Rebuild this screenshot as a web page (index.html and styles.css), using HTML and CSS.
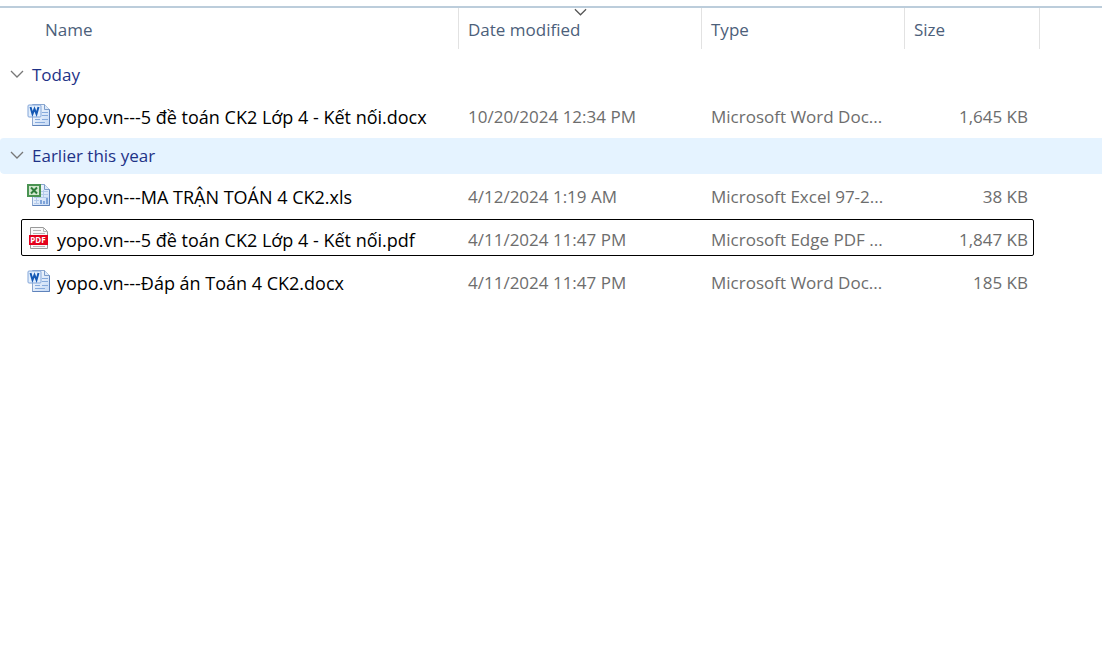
FILE: index.html
```html
<!DOCTYPE html>
<html lang="vi">
<head>
<meta charset="utf-8">
<meta name="viewport" content="width=device-width, initial-scale=1">
<title>Files</title>
<link rel="stylesheet" href="styles.css">
</head>
<body>
<svg class="symbols" aria-hidden="true">
  <defs>
    <linearGradient id="paper" x1="0" y1="0" x2="1" y2="1">
      <stop offset="0" stop-color="#ffffff"/>
      <stop offset="1" stop-color="#c3d8f5"/>
    </linearGradient>
    <symbol id="icon-word" viewBox="0 0 24 24">
      <path d="M5.500 1.500H17.500L22.500 6.500V22.500H5.500Z" fill="url(#paper)" stroke="#8aa6cf"/>
      <path d="M22.500 6.500V22.500H5.500" fill="none" stroke="#5f83bb"/>
      <path d="M17.500 1.500V6.500H22.500" fill="#dce9fa" stroke="#7d9dca"/>
      <path d="M15 9.500H21M15 12.500H21M8 16.500H13M15 16.500H21M8 19.500H18" stroke="#86aadc"/>
      <rect x="1" y="2" width="13" height="12" rx="1" fill="#e3effd" stroke="#82a5d8"/>
      <path d="M3.500 4L5.500 11L7.500 6L9.500 11L11.500 4" fill="none" stroke="#1559b5" stroke-width="2"/>
    </symbol>
    <symbol id="icon-excel" viewBox="0 0 24 24">
      <path d="M5.500 1.500H17.500L22.500 6.500V22.500H5.500Z" fill="url(#paper)" stroke="#8aa6cf"/>
      <path d="M22.500 6.500V22.500H5.500" fill="none" stroke="#5f83bb"/>
      <path d="M17.500 1.500V6.500H22.500" fill="#dce9fa" stroke="#7d9dca"/>
      <path d="M14 8.500H21M14 11.500H21M7 14.500H21M7 17.500H12M7 20.500H12M16.500 7V14M9.500 14V21" stroke="#b4caea"/>
      <path d="M13 21V17H15V21M16 21V18H18V21M19 21V15H21V21" fill="#7fa4d9"/>
      <rect x="1" y="2" width="12" height="11" fill="#d3e8cf" stroke="#4a9352" stroke-width="2"/>
      <path d="M4 4.500L10 10.500M10 4.500L4 10.500" stroke="#2f7d3c" stroke-width="2"/>
    </symbol>
    <symbol id="icon-pdf" viewBox="0 0 24 24">
      <path d="M3.500 1.500H16.500L20.500 5.500V22.500H3.500Z" fill="#f8f8f8" stroke="#999"/>
      <path d="M16.500 1.500V5.500H20.500M6 4.500H14M6 7.500H18M6 20.500H18" fill="none" stroke="#b5b5b5"/>
      <rect x="2" y="9" width="19" height="10" fill="#e3001b"/>
      <text x="11" y="17" text-anchor="middle" class="pdf-label">PDF</text>
    </symbol>
    <symbol id="icon-chevron" viewBox="0 0 14 8">
      <path d="M1 1L7 7L13 1" fill="none" stroke="currentColor" stroke-width="1.300"/>
    </symbol>
  </defs>
</svg>

<main class="explorer">
  <table class="files">
    <colgroup>
      <col class="col-name"><col class="col-date"><col class="col-type"><col class="col-size"><col class="col-rest">
    </colgroup>
    <thead>
      <tr>
        <th scope="col" class="head head-name"><button type="button" class="head-button">Name</button></th>
        <th scope="col" class="head" aria-sort="descending"><button type="button" class="head-button">Date modified<svg class="sort-mark" aria-hidden="true"><use href="#icon-chevron"/></svg></button></th>
        <th scope="col" class="head"><button type="button" class="head-button">Type</button></th>
        <th scope="col" class="head"><button type="button" class="head-button">Size</button></th>
        <td></td>
      </tr>
    </thead>
    <tbody>
      <tr>
        <th colspan="5" scope="rowgroup" class="group group-first"><button type="button" class="group-button" aria-expanded="true"><svg class="chevron" aria-hidden="true"><use href="#icon-chevron"/></svg>Today</button></th>
      </tr>
      <tr class="file">
        <td class="name"><div class="name-box"><svg class="icon" aria-hidden="true"><use href="#icon-word"/></svg>yopo.vn---5 đề toán CK2 Lớp 4 - Kết nối.docx</div></td>
        <td>10/20/2024 12:34 PM</td>
        <td>Microsoft Word Doc...</td>
        <td class="size">1,645 KB</td>
        <td></td>
      </tr>
    </tbody>
    <tbody>
      <tr>
        <th colspan="5" scope="rowgroup" class="group group-hover"><button type="button" class="group-button" aria-expanded="true"><svg class="chevron" aria-hidden="true"><use href="#icon-chevron"/></svg>Earlier this year</button></th>
      </tr>
      <tr class="file">
        <td class="name"><div class="name-box"><svg class="icon" aria-hidden="true"><use href="#icon-excel"/></svg>yopo.vn---MA TRẬN TOÁN 4 CK2.xls</div></td>
        <td>4/12/2024 1:19 AM</td>
        <td>Microsoft Excel 97-2...</td>
        <td class="size">38 KB</td>
        <td></td>
      </tr>
      <tr class="file focused">
        <td class="name"><div class="name-box"><svg class="icon" aria-hidden="true"><use href="#icon-pdf"/></svg>yopo.vn---5 đề toán CK2 Lớp 4 - Kết nối.pdf</div></td>
        <td>4/11/2024 11:47 PM</td>
        <td>Microsoft Edge PDF ...</td>
        <td class="size">1,847 KB</td>
        <td></td>
      </tr>
      <tr class="file">
        <td class="name"><div class="name-box"><svg class="icon" aria-hidden="true"><use href="#icon-word"/></svg>yopo.vn---Đáp án Toán 4 CK2.docx</div></td>
        <td>4/11/2024 11:47 PM</td>
        <td>Microsoft Word Doc...</td>
        <td class="size">185 KB</td>
        <td></td>
      </tr>
    </tbody>
  </table>
</main>
</body>
</html>
```

FILE: styles.css
```css
* {
  box-sizing: border-box;
}

body {
  margin: 0;
  padding-top: 6px;
  background: #fff;
  color: #6d6d6d;
  font: 17px/24px "Open Sans", "Noto Sans", sans-serif;
}

.symbols {
  position: absolute;
  width: 0;
  height: 0;
}

.pdf-label {
  font: bold 8px "Open Sans", sans-serif;
  fill: #fff;
}

.explorer {
  border-top: 2px solid #bccddb;
}

.files {
  width: 100%;
  table-layout: fixed;
  border-collapse: separate;
  border-spacing: 0;
}

.col-date { width: 243px; }
.col-type { width: 203px; }
.col-size { width: 135px; }
.col-rest { width: 62px; }

th,
td {
  padding: 0;
  font-weight: normal;
  text-align: left;
  white-space: nowrap;
}

button {
  border: 0;
  background: none;
  color: inherit;
  font: inherit;
  text-align: left;
}

.head {
  height: 41px;
  border-right: 1px solid #e2e2e2;
  color: #4c607a;
}

.head-button {
  position: relative;
  display: block;
  width: 100%;
  height: 41px;
  padding: 2px 8px 0 9px;
}

.head-name .head-button {
  padding-left: 45px;
}

.sort-mark {
  position: absolute;
  top: 0;
  left: calc(50% - 6px);
  width: 13px;
  height: 8px;
  color: #555;
}

.group {
  height: 37px;
  color: #1e3287;
}

.group-first {
  padding: 8px 0 1px;
}

.group-hover {
  border-top: 1px solid transparent;
  border-radius: 4px 0 0 4px;
  background-color: #e5f3ff;
  background-clip: padding-box;
}

.group-button {
  display: flex;
  align-items: center;
  gap: 8px;
  width: 100%;
  height: 36px;
  padding: 0 10px;
}

.chevron {
  width: 14px;
  height: 8px;
  margin-bottom: 2px;
  color: #777;
}

.file {
  position: relative;
}

.file td {
  height: 43px;
  padding: 2px 9px 0;
}

.file .name {
  padding-left: 27px;
  color: #000;
  font-size: 18px;
}

.name-box {
  display: flex;
  align-items: center;
  gap: 6px;
}

.icon {
  flex: none;
  width: 24px;
  height: 24px;
  margin-top: -4px;
}

.file .size {
  padding-right: 12px;
  text-align: right;
}

.focused .name::after {
  content: "";
  position: absolute;
  inset: 2px 68px 4px 21px;
  border: 1px solid #000;
  border-radius: 2px;
}
```
